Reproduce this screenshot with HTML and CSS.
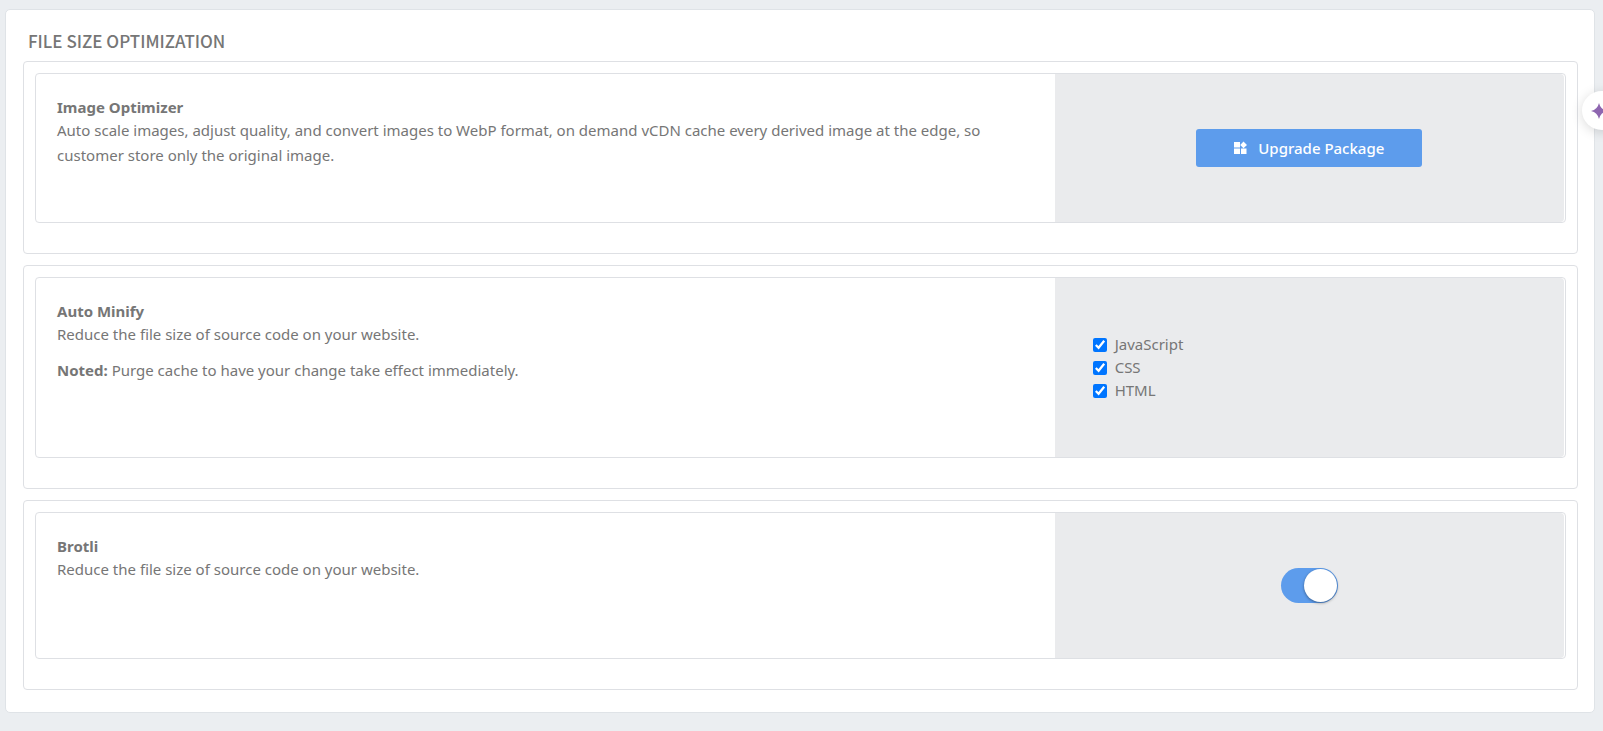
FILE: index.html
```html
<!DOCTYPE html>
<html lang="en">
<head>
	<meta charset="UTF-8">
	<title>File Size Optimization</title>
	<link rel="stylesheet" href="styles.css">
</head>
<body>
	<main class="card">
		<h1 class="card-title">FILE SIZE OPTIMIZATION</h1>

		<section class="group">
			<div class="setting setting-medium">
				<div class="info">
					<h2 class="name">Image Optimizer</h2>
					<p class="desc">Auto scale images, adjust quality, and convert images to WebP format, on demand vCDN cache every derived image at the edge, so customer store only the original image.</p>
				</div>
				<div class="control">
					<button class="btn" type="button">
						<svg class="btn-icon" viewBox="0 0 13 12" aria-hidden="true">
							<path d="M0 0h6v5.500H0zM0 6.500h6V12H0zM7 6.500h5.500V12H7zM9.500 -.5L13 3 9.500 6.200 6.200 3z"/>
						</svg>
						<span>Upgrade Package</span>
					</button>
				</div>
			</div>
		</section>

		<section class="group">
			<div class="setting setting-tall">
				<div class="info">
					<h2 class="name">Auto Minify</h2>
					<p class="desc">Reduce the file size of source code on your website.</p>
					<p class="desc"><strong>Noted:</strong> Purge cache to have your change take effect immediately.</p>
				</div>
				<div class="control control-list">
					<label class="check"><input type="checkbox" checked>JavaScript</label>
					<label class="check"><input type="checkbox" checked>CSS</label>
					<label class="check"><input type="checkbox" checked>HTML</label>
				</div>
			</div>
		</section>

		<section class="group">
			<div class="setting">
				<div class="info">
					<h2 class="name"><label for="brotli">Brotli</label></h2>
					<p class="desc">Reduce the file size of source code on your website.</p>
				</div>
				<div class="control">
					<input class="switch" id="brotli" type="checkbox" checked>
				</div>
			</div>
		</section>
	</main>

	<button class="assistant" type="button" aria-label="Assistant">
		<svg viewBox="0 0 16 16" width="16" height="16" aria-hidden="true">
			<path d="M8 0Q9.500 6.500 16 8 9.500 9.500 8 16 6.500 9.500 0 8 6.500 6.500 8 0z"/>
		</svg>
	</button>
</body>
</html>
```

FILE: styles.css
```css
* {
	box-sizing: border-box;
}

body {
	margin: 0;
	padding: 9px 8px 18px 5px;
	background: #ebeef1;
	color: #767676;
	font-family: "Noto Sans", sans-serif;
	font-size: 15px;
	line-height: 23px;
	overflow-x: hidden;
}

h1, h2, p {
	margin: 0;
}

.card {
	padding: 19px 16px 22px 17px;
	background: #fff;
	border: 1px solid #dfe3e7;
	border-radius: 5px;
}

.card-title {
	padding-left: 5px;
	margin-bottom: 9px;
	font-family: "Noto Sans CJK SC", "Noto Sans", sans-serif;
	font-size: 17px;
	font-weight: 500;
	line-height: 23px;
}

.group {
	padding: 11px 11px 30px;
	border: 1px solid #dee0e4;
	border-radius: 4px;
}

.group + .group {
	margin-top: 11px;
}

.setting {
	display: grid;
	grid-template-columns: 2fr 1fr;
	min-height: 147px;
	padding-right: 1px;
	border: 1px solid #dee0e4;
	border-radius: 4px;
}

.setting-medium {
	min-height: 150px;
}

.setting-tall {
	min-height: 181px;
}

.info {
	padding: 22px 21px;
}

.name {
	font-size: 15px;
	font-weight: 700;
	line-height: 22px;
}

.desc {
	line-height: 25px;
}

.desc + .desc {
	margin-top: 11px;
}

.control {
	display: flex;
	align-items: center;
	justify-content: center;
	background: #eaebed;
	border-radius: 0 4px 4px 0;
}

.control-list {
	flex-direction: column;
	align-items: flex-start;
	padding-left: 38px;
}

.check {
	display: flex;
	align-items: center;
	gap: 8px;
}

.check input {
	width: 14px;
	height: 14px;
	margin: 0;
}

.btn {
	display: flex;
	align-items: center;
	justify-content: center;
	gap: 11px;
	height: 38px;
	padding: 0 38px;
	border: 0;
	border-radius: 3px;
	background: #5d9cec;
	color: #fff;
	font: 500 15px "Noto Sans", sans-serif;
	cursor: pointer;
}

.btn-icon {
	width: 13px;
	height: 12px;
	fill: #fff;
	overflow: visible;
}

.switch {
	display: flex;
	align-items: center;
	justify-content: flex-end;
	width: 57px;
	height: 35px;
	margin: 0;
	padding: 0 1px;
	appearance: none;
	border-radius: 18px;
	background: #5d9cec;
	cursor: pointer;
}

.switch::before {
	content: "";
	width: 33px;
	height: 33px;
	border-radius: 50%;
	background: #fff;
	box-shadow: 0 1px 3px rgba(0, 0, 0, .4);
}

.switch:not(:checked) {
	justify-content: flex-start;
	background: #ccc;
}

/* floating button, half outside of the window */
.assistant {
	position: fixed;
	top: 91px;
	right: -19px;
	display: flex;
	align-items: center;
	justify-content: center;
	width: 40px;
	height: 39px;
	padding: 0 6px 0 0;
	border: 0;
	border-radius: 50%;
	background: #fff;
	box-shadow: 0 2px 12px rgba(0, 0, 0, .15);
	fill: #8e66b0;
}
```
